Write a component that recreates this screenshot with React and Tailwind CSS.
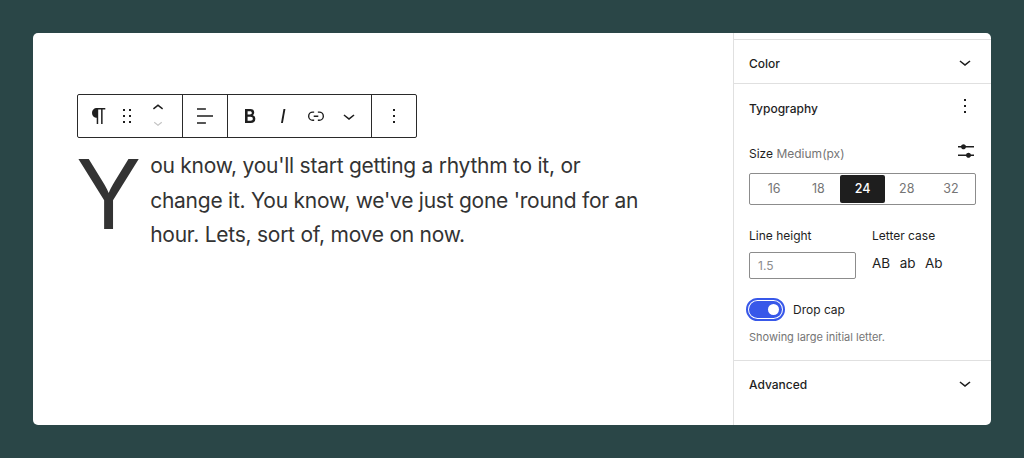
const P = {
  para: "M18.3 4H9.9v-.1l-.9.2c-2.3.4-4 2.4-4 4.8s1.7 4.4 4 4.8l.7.1V20h1.5V5.5h2.9V20h1.5V5.5h2.7V4z",
  drag: "M8 7h2V5H8v2zm0 6h2v-2H8v2zm0 6h2v-2H8v2zm6-14v2h2V5h-2zm0 8h2v-2h-2v2zm0 6h2v-2h-2v2z",
  align: "M4 19.8h8.9v-1.5H4v1.5zm8.9-15.6H4v1.5h8.9V4.2zm-8.9 7v1.5h16v-1.5H4z",
  bold: "M14.7 11.3c1-.6 1.5-1.6 1.5-3 0-2.3-1.3-3.4-4-3.4H7v14h5.8c1.4 0 2.5-.3 3.3-1 .8-.7 1.2-1.7 1.2-2.9.1-1.9-.8-3.1-2.6-3.7zm-5.1-4h2.3c.6 0 1.1.1 1.4.4.3.3.5.7.5 1.2s-.2 1-.5 1.2c-.3.3-.8.4-1.4.4H9.6V7.3zm4.6 9c-.4.3-1 .4-1.7.4H9.6v-3.9h2.9c.7 0 1.3.2 1.7.5.4.3.6.8.6 1.5s-.2 1.2-.6 1.5z",
  italic: "M12.5 5L10 19h1.9l2.5-14z",
  link: "M10 17.389H8.444A5.194 5.194 0 1 1 8.444 7H10v1.5H8.444a3.694 3.694 0 0 0 0 7.389H10v1.5ZM14 7h1.556a5.194 5.194 0 0 1 0 10.39H14v-1.5h1.556a3.694 3.694 0 0 0 0-7.39H14V7Zm-4.5 6h5v-1.5h-5V13Z",
  down: "M17.5 11.6L12 16l-5.5-4.4.9-1.2L12 14l4.5-3.6 1 1.2z",
  up: "M6.5 12.4L12 8l5.5 4.4-.9 1.2L12 10l-4.5 3.6-1-1.2z",
  more: "M13 19h-2v-2h2v2zm0-6h-2v-2h2v2zm0-6h-2V5h2v2z",
  sliders: "M14.5 13.8c-1.1 0-2.1.7-2.4 1.8H4V17h8.1c.3 1 1.3 1.8 2.4 1.8s2.1-.7 2.4-1.8H20v-1.5h-3.1c-.3-1-1.3-1.7-2.4-1.7zM11.9 7c-.3-1-1.3-1.8-2.4-1.8S7.4 6 7.1 7H4v1.5h3.1c.3 1 1.3 1.8 2.4 1.8s2.1-.7 2.4-1.8H20V7h-8.1z",
};

function Icon({ d, size = 24, className = "" }) {
  return (
    <svg width={size} height={size} viewBox="0 0 24 24" fill="currentColor" className={`shrink-0 ${className}`}>
      <path d={d} />
    </svg>
  );
}

function Tool({ d, size = 24 }) {
  return (
    <span className="flex h-full w-[33px] items-center justify-center">
      <Icon d={d} size={size} />
    </span>
  );
}

function Toolbar() {
  return (
    <div className="flex h-[44px] w-[340px] items-stretch rounded-[2px] border border-[#2a2a2a] bg-white text-[#1e1e1e]">
      <div className="flex w-[105px] items-center border-r border-[#2a2a2a] pl-[4px]">
        <Tool d={P.para} />
        <span className="flex w-[24px] justify-center"><Icon d={P.drag} /></span>
        <span className="ml-[2px] flex w-[33px] flex-col items-center">
          <Icon d={P.up} size={22} className="-mb-[8px] -mt-[3px]" />
          <Icon d={P.down} size={18} className="mt-[3px] text-[#c4c4c4]" />
        </span>
      </div>
      <div className="flex w-[45px] items-center justify-center border-r border-[#2a2a2a]">
        <Icon d={P.align} />
      </div>
      <div className="flex w-[144px] items-center border-r border-[#2a2a2a] pl-[5px]">
        <Tool d={P.bold} />
        <Tool d={P.italic} />
        <Tool d={P.link} size={22} />
        <Tool d={P.down} />
      </div>
      <div className="flex flex-1 items-center justify-center">
        <Icon d={P.more} />
      </div>
    </div>
  );
}

function Panel({ title }) {
  return (
    <div className="flex h-[43px] items-center justify-between pl-[15px] pr-[14px]">
      <span className="mt-[4px] text-[12px] font-medium text-[#1e1e1e]">{title}</span>
      <Icon d={P.down} size={24} className="text-[#1e1e1e]" />
    </div>
  );
}

function Sizes() {
  return (
    <div className="flex h-[32px] items-center rounded-[2px] border border-[#8c8c8c] px-[2px]">
      {["16", "18", "24", "28", "32"].map((s) => (
        <span
          key={s}
          className={
            s === "24"
              ? "flex h-[28px] w-[44.6px] items-center justify-center rounded-[2px] bg-[#1e1e1e] text-[12.5px] font-medium text-white"
              : "flex h-[28px] w-[44.6px] items-center justify-center text-[12.5px] text-[#757575]"
          }
        >
          {s}
        </span>
      ))}
    </div>
  );
}

export default function App() {
  return (
    <div
      className="flex h-[458px] w-[1024px] bg-[#2a4647] px-[33px] py-[33px] text-[#1e1e1e]"
      style={{ fontFamily: "Inter, 'Noto Sans', sans-serif" }}
    >
      <div className="flex h-[392px] w-[958px] overflow-hidden rounded-[5px] bg-white">
        <main className="min-w-0 flex-1 pl-[44px] pt-[61px]">
          <Toolbar />
          <p className="mt-[11px] w-[570px] text-[21px] leading-[34.5px] tracking-[-0.25px] text-[#333333]">
            <span className="float-left mr-[9px] mt-[3px] -ml-[1px] text-[96px] font-normal leading-[84px] tracking-normal">Y</span>
            ou know, you'll start getting a rhythm to it, or change it. You know, we've just gone 'round for an hour. Lets, sort of, move on now.
          </p>
        </main>

        <aside className="flex w-[258px] shrink-0 flex-col border-l border-[#e0e0e0] pt-[6px]">
          <div className="border-y border-[#e0e0e0]">
            <Panel title="Color" />
          </div>

          <div className="flex flex-col border-b border-[#e0e0e0] px-[15px] pb-[15px]">
            <div className="flex h-[48px] items-center justify-between">
              <span className="mt-[2px] text-[12px] font-medium">Typography</span>
              <Icon d={P.more} size={24} className="-mr-[1px] -mt-[4px]" />
            </div>
            <div className="mt-[10px] flex h-[24px] items-center justify-between">
              <span className="text-[12px]">
                Size <span className="text-[#757575]">Medium(px)</span>
              </span>
              <Icon d={P.sliders} size={24} className="-mr-[2px] -mt-[6px]" />
            </div>
            <div className="mt-[7px]">
              <Sizes />
            </div>

            <div className="mt-[21px] flex">
              <div className="w-[123px]">
                <div className="text-[12px] leading-[20px]">Line height</div>
                <div className="mt-[6px] flex h-[27px] w-[107px] items-center rounded-[2px] border border-[#8c8c8c] pl-[8px] text-[12px] text-[#8c8c8c]">
                  1.5
                </div>
              </div>
              <div>
                <div className="text-[12px] leading-[20px]">Letter case</div>
                <div className="mt-[7px] flex gap-[9.5px] text-[13.5px] leading-[20px]">
                  <span>AB</span>
                  <span>ab</span>
                  <span>Ab</span>
                </div>
              </div>
            </div>

            <div className="-ml-[3px] mt-[19px] flex items-center">
              <span className="flex h-[23px] w-[39px] items-center justify-end rounded-full border-2 border-[#3858e9] bg-white p-[1px]">
                <span className="flex h-[17px] w-[33px] items-center justify-end rounded-full bg-[#3858e9] pr-[3px]">
                  <span className="h-[11px] w-[11px] rounded-full bg-white" />
                </span>
              </span>
              <span className="ml-[8px] text-[12px]">Drop cap</span>
            </div>
            <div className="mt-[8px] text-[11px] leading-[16px] text-[#757575]">Showing large initial letter.</div>
          </div>

          <Panel title="Advanced" />
        </aside>
      </div>
    </div>
  );
}
